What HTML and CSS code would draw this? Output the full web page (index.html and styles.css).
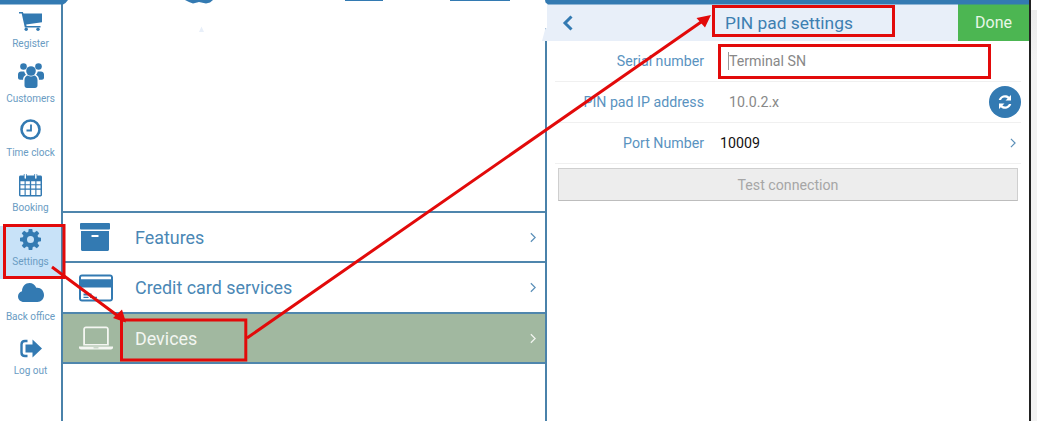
FILE: index.html
```html
<!DOCTYPE html>
<html lang="en">
<head>
<meta charset="utf-8">
<title>PIN pad settings</title>
<link rel="stylesheet" href="styles.css">
</head>
<body>
<div class="app">
  <nav class="sidebar">
    <div class="nav-item">
      <svg class="nav-icon cart" viewBox="0 0 23 19"><path d="M0 0h3.800l.7 1.500H23v8.800L7.200 12.400l.4 1.500H21.500v1.500H5.800L2.700 1.500H0z"/><circle cx="7.200" cy="17.300" r="1.700"/><circle cx="19" cy="17.300" r="1.700"/></svg>
      <span>Register</span>
    </div>
    <div class="nav-item">
      <svg class="nav-icon users" viewBox="0 0 26 25"><circle cx="5.500" cy="3.500" r="3.300"/><circle cx="20.500" cy="3.500" r="3.300"/><circle cx="13" cy="8" r="4.800"/><path d="M0 11.500c0-2 1.500-3 3-3h3.200c.5 1.500 1 2.500 1.800 3.300-2 1-3 2.700-3 5H2c-1 0-2-.8-2-2zM26 11.500c0-2-1.500-3-3-3h-3.200c-.5 1.500-1 2.500-1.800 3.300 2 1 3 2.700 3 5h3c1 0 2-.8 2-2z"/><path d="M6.500 17c0-2.800 2-4.500 3.500-4.500 1 .7 2 1 3 1s2-.3 3-1c1.500 0 3.500 1.700 3.500 4.500v5.500c0 1.500-1 2.500-2.500 2.500H9c-1.500 0-2.500-1-2.500-2.500z"/></svg>
      <span>Customers</span>
    </div>
    <div class="nav-item">
      <svg class="nav-icon clock" viewBox="0 0 21 21"><circle class="stroke-ring" cx="10.500" cy="10.500" r="9"/><path class="stroke-hand" d="M11 5.500v6H6.500"/></svg>
      <span>Time clock</span>
    </div>
    <div class="nav-item">
      <svg class="nav-icon calendar" viewBox="0 0 24 25"><path fill-rule="evenodd" d="M1.500 3H5V1.500h3V3h8V1.500h3V3h3.500C23.300 3 24 3.700 24 4.500v19c0 .8-.7 1.500-1.500 1.500h-21C.7 25 0 24.300 0 23.500v-19C0 3.700.7 3 1.500 3zM1.500 9v3.200h4.300V9zM7 9v3.200h4.300V9zM12.700 9v3.200H17V9zM18.200 9v3.200h4.300V9zM1.500 13.400v3.400h4.300v-3.400zM7 13.400v3.400h4.300v-3.400zM12.700 13.400v3.400H17v-3.400zM18.200 13.400v3.400h4.300v-3.400zM1.500 18v5.500h4.300V18zM7 18v5.500h4.300V18zM12.700 18v5.500H17V18zM18.200 18v5.500h4.300V18z"/><rect class="pin" x="5.800" y="0" width="1.500" height="6.500" rx=".7"/><rect class="pin" x="16.800" y="0" width="1.500" height="6.500" rx=".7"/></svg>
      <span>Booking</span>
    </div>
    <div class="nav-item active">
      <svg class="nav-icon gear" viewBox="0 0 24 24"><path fill-rule="evenodd" d="M10 0h4l.6 3.300 1.800.7L19.200 2 22 4.800l-2 2.800.8 1.800L24 10v4l-3.200.6-.8 1.800 2 2.800-2.800 2.800-2.800-2-1.800.7L14 24h-4l-.6-3.300-1.800-.7-2.800 2L2 19.200l2-2.800-.8-1.800L0 14v-4l3.200-.6.800-1.800-2-2.800L4.800 2l2.800 2 1.800-.7zM12 8a4 4 0 1 0 0 8 4 4 0 0 0 0-8z"/></svg>
      <span>Settings</span>
    </div>
    <div class="nav-item">
      <svg class="nav-icon cloud" viewBox="0 0 26 19"><path d="M6 19C2.500 19 0 16.500 0 13.500 0 11 1.500 9 4 8.300 4 3.500 7.500 0 11.500 0c3 0 5.500 1.700 6.800 4.800 4.300-.6 7.700 2.700 7.700 7.200C26 16 23 19 19.500 19z"/></svg>
      <span>Back office</span>
    </div>
    <div class="nav-item">
      <svg class="nav-icon logout" viewBox="0 0 22 19"><path class="stroke-door" d="M7.500 2H5C3 2 1.500 3.500 1.500 5.500v8C1.500 15.500 3 17 5 17h2.500"/><path d="M12.500 .5 22 9.500 12.500 18.500V13.500H5.500V5.500h7z"/></svg>
      <span>Log out</span>
    </div>
  </nav>

  <section class="menu">
    <div class="menu-blank"></div>
    <div class="menu-row">
      <svg class="row-icon" viewBox="-1 -1 34 30"><rect x="0" y="0" width="30" height="6.500" rx="1"/><path fill-rule="evenodd" d="M1 8h28v18.500c0 .8-.7 1.500-1.500 1.500h-25C1.700 28 1 27.300 1 26.500zM11.500 12v2h7v-2z"/></svg>
      <span class="row-label">Features</span>
      <svg class="chevron" viewBox="0 0 7 12"><path d="M1 1l5 5-5 5"/></svg>
    </div>
    <div class="menu-row">
      <svg class="row-icon" viewBox="0 -1 34 29"><path fill-rule="evenodd" d="M3 0h28c1.700 0 3 1.300 3 3v21c0 1.700-1.300 3-3 3H3c-1.700 0-3-1.300-3-3V3c0-1.700 1.300-3 3-3zM2 3v1.800h30V3c0-.6-.4-1-1-1H3c-.6 0-1 .4-1 1zM2 13v11c0 .6.400 1 1 1h28c.6 0 1-.4 1-1V13zM4.500 19h8v2h-8zM4.500 22.200h5v1.300h-5zM11 22.200h7v1.300h-7z"/></svg>
      <span class="row-label">Credit card services</span>
      <svg class="chevron" viewBox="0 0 7 12"><path d="M1 1l5 5-5 5"/></svg>
    </div>
    <div class="menu-row selected">
      <svg class="row-icon" viewBox="0 0 34 23"><path fill-rule="evenodd" d="M7 0h20c1.500 0 2.800 1.300 2.800 2.800V19H4.200V2.800C4.200 1.300 5.500 0 7 0zM6 2.800V17.500h22V2.800c0-.6-.4-1-1-1H7c-.6 0-1 .4-1 1z"/><path fill-rule="evenodd" d="M0 20h34v1c0 1.100-.9 2-2 2H2c-1.100 0-2-.9-2-2zM14.500 21v.7h5V21z"/></svg>
      <span class="row-label">Devices</span>
      <svg class="chevron" viewBox="0 0 7 12"><path d="M1 1l5 5-5 5"/></svg>
    </div>
  </section>

  <section class="detail">
    <header class="detail-head">
      <svg class="back" viewBox="0 0 12 16"><path d="M9.500 1.500 3 8l6.500 6.500"/></svg>
      <h1>PIN pad settings</h1>
      <button class="done" type="button">Done</button>
    </header>
    <div class="form">
      <div class="form-row">
        <label>Serial number</label>
        <span class="value placeholder"><i class="caret"></i>Terminal SN</span>
      </div>
      <div class="form-row">
        <label>PIN pad IP address</label>
        <span class="value muted">10.0.2.x</span>
        <span class="refresh">
          <svg viewBox="0 0 16 16"><path d="M14 1v5.500H8.500l2.100-2.100A4.200 4.200 0 0 0 4 6H1.700a6.500 6.500 0 0 1 10.500-3.200zM2 15V9.500h5.500l-2.100 2.100A4.200 4.200 0 0 0 12 10h2.300a6.500 6.500 0 0 1-10.500 3.200z"/></svg>
        </span>
      </div>
      <div class="form-row">
        <label>Port Number</label>
        <span class="value">10009</span>
        <svg class="chevron small" viewBox="0 0 7 12"><path d="M1 1l5 5-5 5"/></svg>
      </div>
    </div>
    <button class="test" type="button">Test connection</button>
  </section>
  <aside class="gutter"></aside>
</div>

<svg class="overlay" width="1037" height="421" viewBox="0 0 1037 421">
  <rect class="patch" x="543" y="0" width="4" height="28"/>
  <path class="fleck" d="M201.500 26.500l2.500 5.500h-5zM545.500 28 542 41h5V28z"/>
  <path class="scrap" d="M0 0h68l-2.500 3-2.500 1.500H0zM185 0h28l-3 2.500-4 1-7-1.500-6 1.500-4-1.500zM345 0h38v1h-38zM450 0h60v1h-60zM545 0h484v4.500H548l-2.500-2z"/>
  <rect class="mark" x="4.500" y="225.500" width="59.500" height="52"/>
  <rect class="mark" x="121.500" y="320" width="124.300" height="40"/>
  <rect class="mark" x="713.500" y="6.500" width="180" height="29"/>
  <rect class="mark" x="719.500" y="45.500" width="270" height="32"/>
  <path class="line" d="M52 267 118 316M247 338 704 20"/>
  <path class="head" d="M126 322.500 113 318 122 309.500zM711 15 696.500 18 705 27.500z"/>
</svg>
</body>
</html>
```

FILE: styles.css
```css
* { box-sizing: border-box; }
html, body { margin: 0; padding: 0; background: #fff; }
body { width: 1037px; height: 421px; overflow: hidden; font-family: Roboto, "Liberation Sans", sans-serif; color: #3d7fb1; }

.app { display: flex; width: 1037px; height: 421px; }

.sidebar { width: 63px; flex: none; padding-top: 7.5px; border-right: 2px solid #4a82aa; display: flex; flex-direction: column; background: #fff; }
.nav-item { height: 54.5px; flex: none; display: grid; grid-template-rows: 30.5px 12px; justify-items: center; font-size: 10px; line-height: 12px; color: #6a9cc3; }
.nav-item span { white-space: nowrap; }
.nav-item.active { height: 53px; margin-bottom: 1.5px; background: #c8e2f8; }
.nav-icon { display: block; align-self: end; fill: #337ab2; }
.cart { width: 23px; height: 19px; margin-bottom: 7px; }
.users { width: 26px; height: 25px; margin-bottom: 4.5px; }
.clock { width: 21px; height: 21px; margin-bottom: 7px; }
.calendar { width: 23px; height: 25px; margin-bottom: 4.5px; }
.gear { width: 21px; height: 21px; margin-bottom: 6px; }
.cloud { width: 26px; height: 19px; margin-bottom: 8.5px; }
.logout { width: 22px; height: 19px; margin-bottom: 7px; }
.stroke-ring { fill: none; stroke: #337ab2; stroke-width: 2.6; }
.stroke-hand { fill: none; stroke: #337ab2; stroke-width: 1.8; }
.stroke-door { fill: none; stroke: #337ab2; stroke-width: 2.4; }
.pin { fill: #fff; }

.menu { width: 484px; flex: none; border-right: 2px solid #4a82aa; display: flex; flex-direction: column; }
.menu-blank { height: 211px; flex: none; }
.menu-row { height: 50px; flex: none; display: flex; align-items: center; border-top: 2px solid #4f86ad; padding: 0 9px 0 16px; font-size: 17.9px; color: #4a87b5; }
.menu-row:nth-child(3) { height: 51px; }
.menu-row:last-child { height: 52px; border-bottom: 2px solid #4f86ad; }
.menu-row.selected { background: #a1b8a0; color: #f3f6f1; }
.row-icon { width: 34px; height: 30px; flex: none; fill: #337ab2; }
.selected .row-icon { fill: #f4f6f2; }
.row-label { margin-left: 22px; flex: 1; }
.chevron { width: 6px; height: 11px; flex: none; fill: none; stroke: #5a8fb8; stroke-width: 1.4; }
.selected .chevron { stroke: #f3f6f1; }

.detail { width: 482px; flex: none; display: flex; flex-direction: column; padding-top: 4px; }
.detail-head { height: 37px; flex: none; display: flex; align-items: center; background: #e8eff9; }
.back { width: 12px; height: 16px; margin-left: 15px; flex: none; fill: none; stroke: #337ab2; stroke-width: 3; }
h1 { margin: 0 0 0 151px; padding-top: 1px; flex: 1; font-size: 17.4px; font-weight: 400; color: #3d7fb1; }
.done { width: 71px; height: 37px; border: 0; padding: 0 0 1px; background: #4cb652; color: #e8f6e8; font: 400 16px Roboto, "Liberation Sans", sans-serif; }

.form { margin: 0 8px; display: flex; flex-direction: column; }
.form-row { height: 41px; flex: none; display: flex; align-items: center; border-bottom: 1px solid #f0f0f0; font-size: 14.2px; }
.form-row label { width: 149px; flex: none; text-align: right; color: #5a93bf; }
.value { margin-left: 16px; flex: 1; color: #111; }
.value.placeholder { color: #888; margin-left: 25px; position: relative; }
.value.muted { color: #888; margin-left: 25px; }
.caret { position: absolute; left: -1px; top: -1px; width: 1px; height: 18px; background: #999; }
.refresh { width: 32px; height: 32px; flex: none; border-radius: 50%; background: #337ab2; display: flex; align-items: center; justify-content: center; }
.refresh svg { width: 16px; height: 16px; fill: #fff; }
.chevron.small { width: 6px; height: 10px; margin-right: 5px; }

.test { height: 33px; flex: none; margin: 4px 11px 0 11px; border: 1px solid #cfcfcf; border-bottom-color: #bdbdbd; background: #ededed; color: #a6a6a6; font: 400 14.2px Roboto, "Liberation Sans", sans-serif; }

.gutter { flex: 1; margin-top: 0; border-left: 2px solid #222; background: linear-gradient(#fff 10px, #ebebeb 10px, #f2f2f2 60px); }

.overlay { position: absolute; left: 0; top: 0; pointer-events: none; }
.patch { fill: #fff; }
.scrap { fill: #337ab2; }
.fleck { fill: #e8eff9; }
.mark { fill: none; stroke: #e20a0a; stroke-width: 3; }
.line { fill: none; stroke: #e20a0a; stroke-width: 3; }
.head { fill: #e20a0a; }
```
